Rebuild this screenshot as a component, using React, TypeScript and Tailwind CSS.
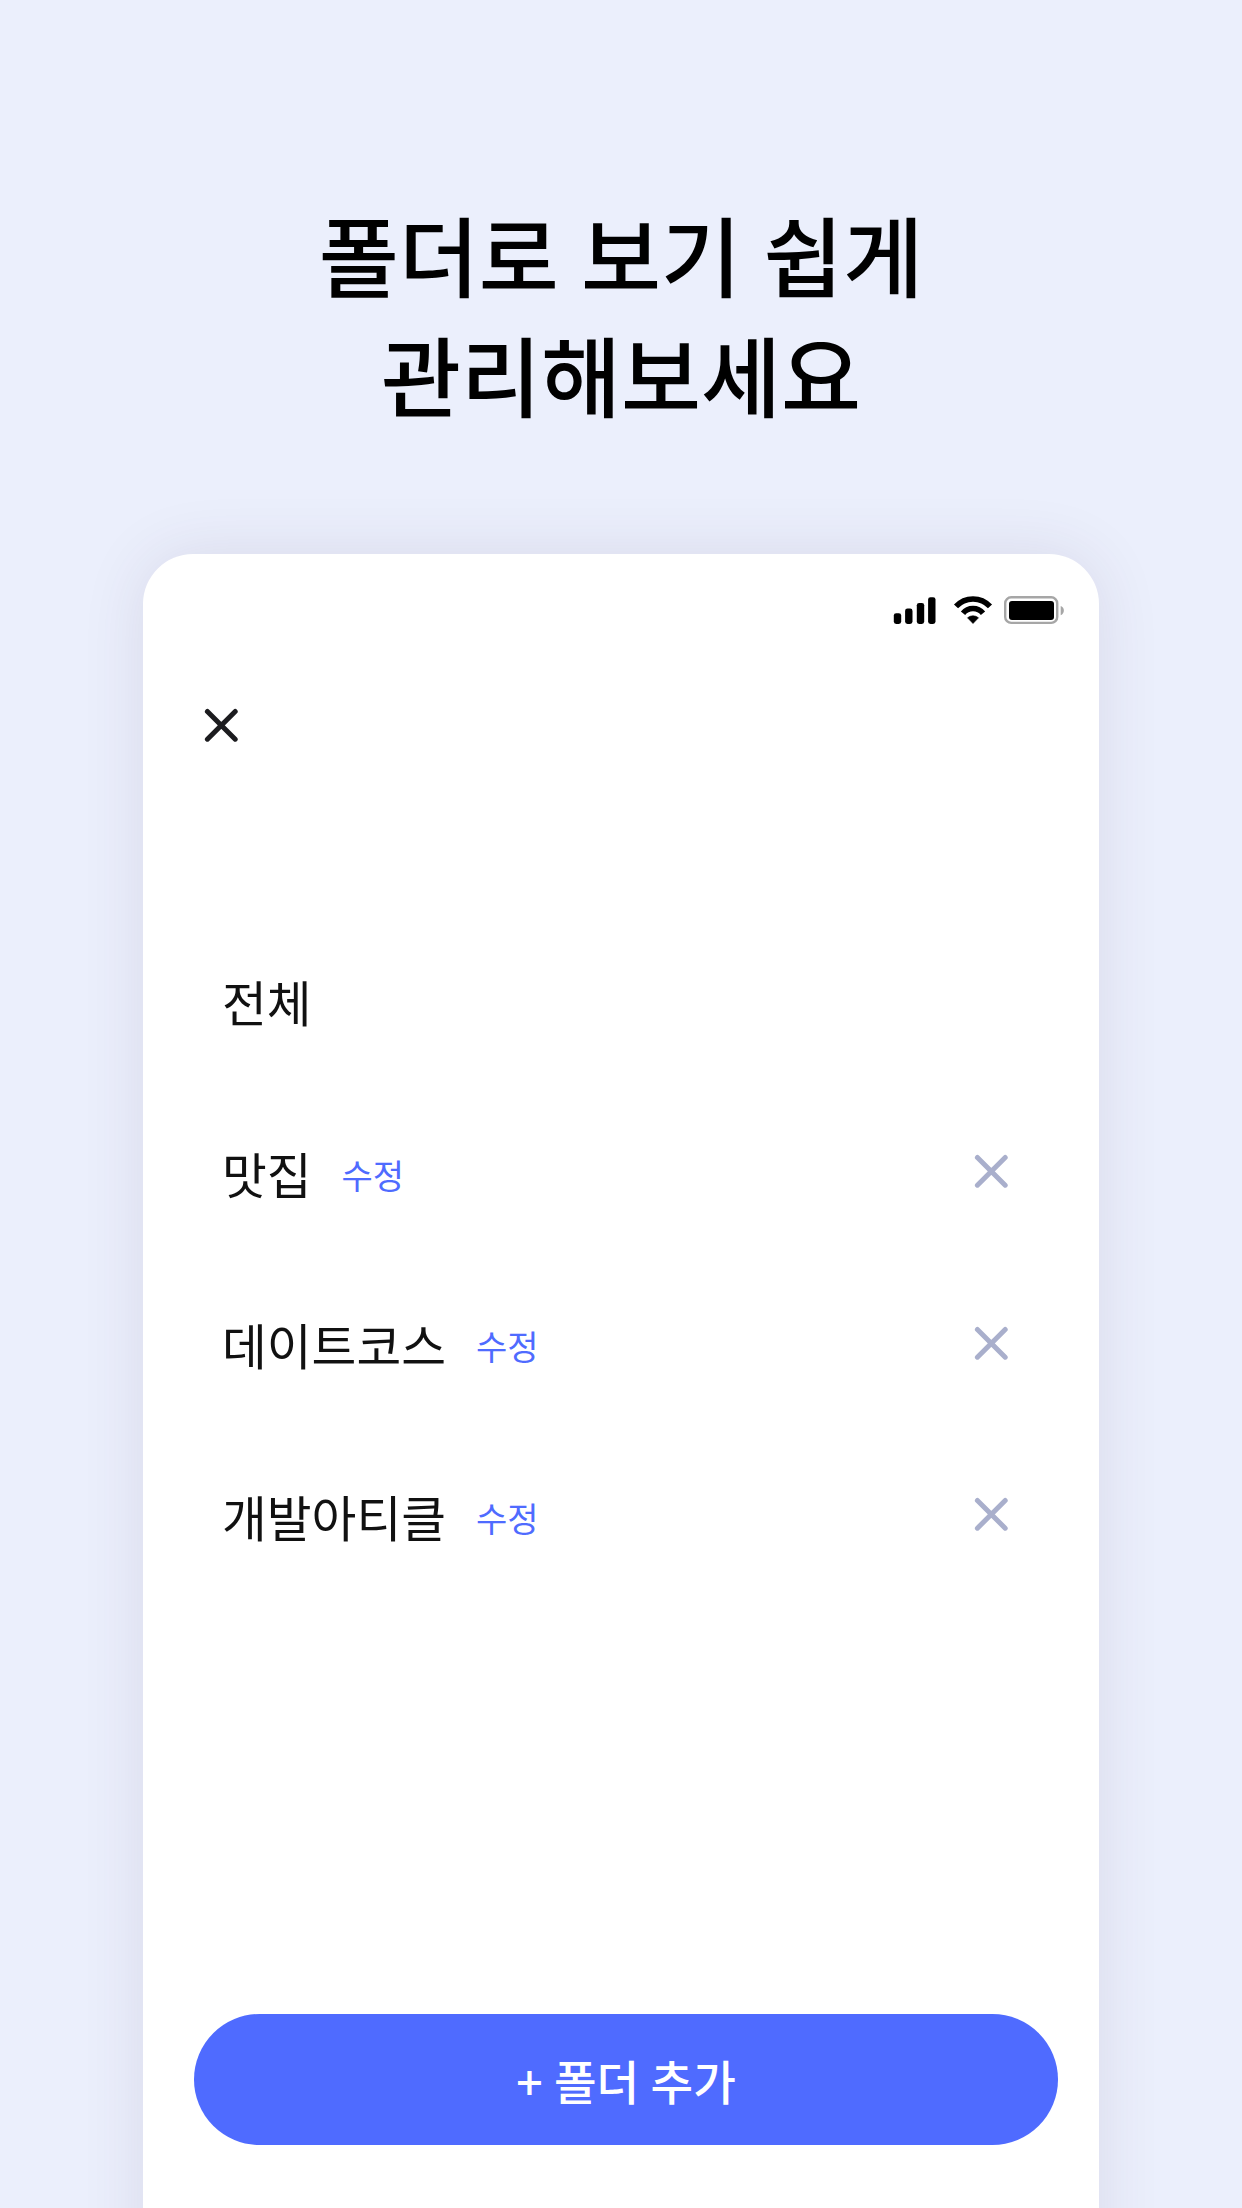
import React from "react";

interface Folder {
  name: string;
  editable: boolean;
}

const folders: Folder[] = [
  { name: "전체", editable: false },
  { name: "맛집", editable: true },
  { name: "데이트코스", editable: true },
  { name: "개발아티클", editable: true },
];

const CloseIcon: React.FC = () => (
  <svg className="size-[35px]" viewBox="0 0 35 35" fill="none" stroke="currentColor" strokeWidth="5" strokeLinecap="round">
    <path d="M3.4 3.4l27.8 27.8M31.2 3.4l-27.8 27.8" />
  </svg>
);

const StatusBar: React.FC = () => (
  <div className="flex justify-end pt-[41px] pr-[33px]">
    <svg className="h-8 w-[174px]" viewBox="0 0 174 32">
      <rect x="1.8" y="18.2" width="7.4" height="10.7" rx="2.4" />
      <rect x="13.1" y="13.5" width="7.4" height="15.4" rx="2.4" />
      <rect x="24.8" y="7.9" width="7.4" height="21" rx="2.4" />
      <rect x="36.1" y="2.2" width="7.4" height="26.7" rx="2.4" />
      <g fill="none" stroke="#000" strokeWidth="5.5">
        <path d="M64 11.4a23 23 0 0 1 34 0" />
        <path d="M71 18.2a12.8 12.8 0 0 1 20 0" />
      </g>
      <path d="M75.5 22.8a8.5 8.5 0 0 1 11 0L81 28.5z" stroke="#000" strokeWidth="0.6" strokeLinejoin="round" />
      <rect x="113.2" y="2.3" width="52" height="25.6" rx="6" fill="none" stroke="#a6a6a6" strokeWidth="2.4" />
      <rect x="117" y="5.9" width="45" height="19" rx="3" />
      <path d="M168.7 10.9v9.3a5 5 0 0 0 0-9.3" fill="#a6a6a6" />
    </svg>
  </div>
);

const App: React.FC = () => {
  return (
    <div className="flex h-[2208px] w-[1242px] flex-col items-center overflow-hidden bg-[#ebeffc] font-['Noto_Sans_CJK_KR',sans-serif]">
      <h1 className="h-[554px] shrink-0 pt-[193px] text-center text-[87px] leading-[120px] font-medium text-black [word-spacing:2.5px]">
        폴더로 보기 쉽게
        <br />
        관리해보세요
      </h1>
      {/* the card runs past the bottom edge of the page */}
      <main className="flex h-[1774px] w-[956px] shrink-0 flex-col rounded-t-[50px] bg-white shadow-[0_0_64px_rgba(75,45,85,0.11)]">
        <StatusBar />
        <button className="mt-[81px] ml-[61px] self-start text-[#1c1c1f]">
          <CloseIcon />
        </button>
        <ul className="mt-[171px] pr-[90px] pl-[79px]">
          {folders.map((folder) => (
            <li key={folder.name} className="flex h-[171.7px] items-center">
              <span className="pt-[2px] text-[48.7px] leading-[72px] text-[#111]">{folder.name}</span>
              {folder.editable && (
                <>
                  <button className="ml-[30px] pt-[5px] text-[34px] text-[#4f6bff]">수정</button>
                  <button className="ml-auto text-[#a9afcc]">
                    <CloseIcon />
                  </button>
                </>
              )}
            </li>
          ))}
        </ul>
        <button className="mt-auto mr-[41px] mb-[183px] ml-[51px] h-[131px] rounded-full bg-[#4f6bff] text-[46.3px] font-medium text-white [word-spacing:1px]">
          + 폴더 추가
        </button>
      </main>
    </div>
  );
};

export default App;
